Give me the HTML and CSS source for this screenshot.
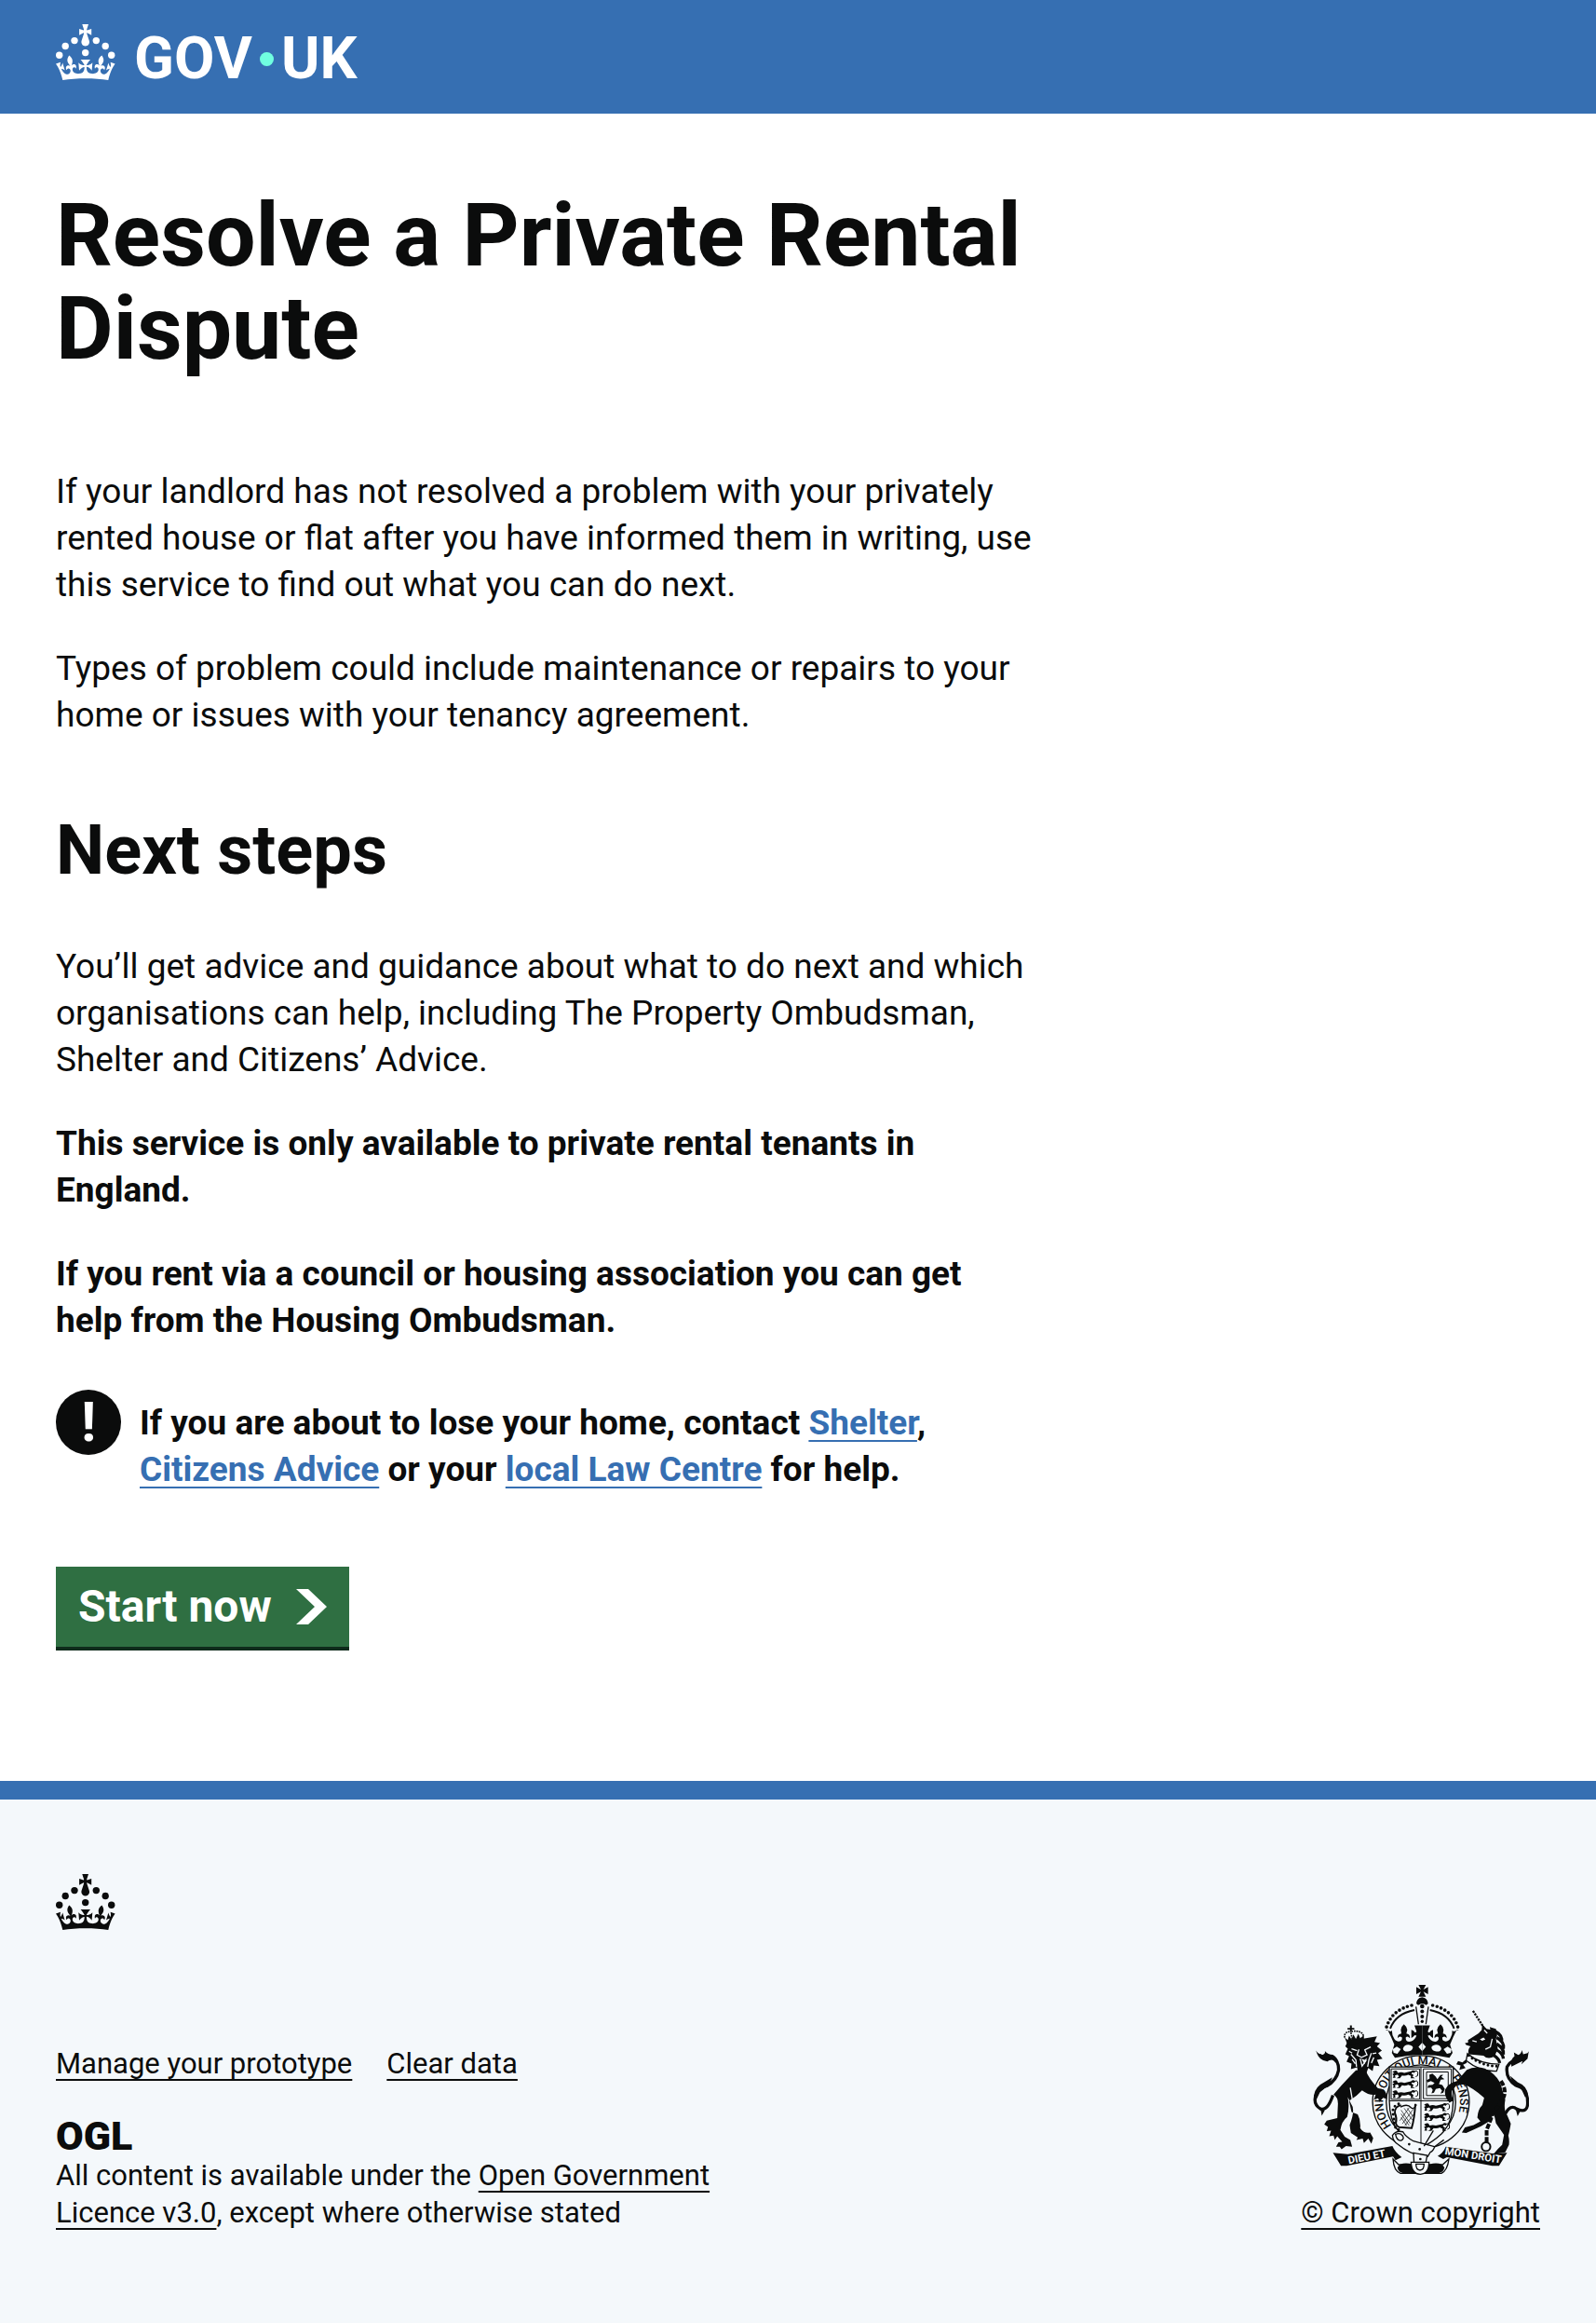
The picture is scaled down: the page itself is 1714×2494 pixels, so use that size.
FILE: index.html
```html
<!DOCTYPE html>
<html lang="en">
<head>
<meta charset="utf-8">
<meta name="viewport" content="width=device-width, initial-scale=1">
<title>Resolve a Private Rental Dispute – GOV.UK</title>
<link rel="stylesheet" href="styles.css">
</head>
<body>
<svg class="sprite" aria-hidden="true">
  <symbol id="crown" viewBox="0 0 64 60">
    <circle cx="20" cy="17.6" r="3.7"/><circle cx="10.2" cy="23.5" r="3.7"/><circle cx="3.7" cy="33.2" r="3.7"/><circle cx="31.7" cy="30.6" r="3.7"/><circle cx="43.3" cy="17.6" r="3.7"/><circle cx="53.2" cy="23.5" r="3.7"/><circle cx="59.7" cy="33.2" r="3.7"/>
    <path d="M33.1,9.8c.2-.1.3-.3.5-.5l4.6,2.4v-6.8l-4.6,1.5c-.1-.2-.3-.3-.5-.5l1.9-5.9h-6.7l1.9,5.9c-.2.1-.3.3-.5.5l-4.6-1.5v6.8l4.6-2.4c.1.2.3.3.5.5l-2.6,8c-.9,2.8,1.2,5.7,4.1,5.7h0c3,0,5.1-2.9,4.1-5.7l-2.6-8ZM37,37.9s-3.4,3.8-4.1,6.1c2.2,0,4.2-.5,6.4-2.8l-.7,8.5c-2-2.8-4.4-4.1-5.7-3.8.1,3.1.5,6.7,5.8,7.2,3.7.3,6.7-1.5,7-3.8.4-2.6-2-4.3-3.7-1.6-1.4-4.5,2.4-6.1,4.9-3.2-1.9-4.5-1.8-7.7,2.4-10.9,3,4,2.6,7.3-1.2,11.1,2.4-1.3,6.2,0,4,4.6-1.2-2.8-3.7-2.2-4.2.2-.3,1.7.7,3.7,3,4.2,1.9.3,4.7-.9,7-5.9-1.3,0-2.4.7-3.9,1.7l2.4-8c.6,2.3,1.4,3.7,2.2,4.5.6-1.6.5-2.8,0-5.3l5,1.8c-2.6,3.6-5.2,8.7-7.3,17.5-7.4-1.1-15.7-1.7-24.5-1.7h0c-8.8,0-17.1.6-24.5,1.7-2.1-8.9-4.7-13.9-7.3-17.5l5-1.8c-.5,2.5-.6,3.7,0,5.3.8-.8,1.6-2.3,2.2-4.5l2.4,8c-1.5-1-2.6-1.7-3.9-1.7,2.3,5,5.2,6.2,7,5.9,2.3-.4,3.3-2.4,3-4.2-.5-2.4-3-3.1-4.2-.2-2.2-4.6,1.6-6,4-4.6-3.7-3.7-4.2-7.1-1.2-11.1,4.2,3.2,4.3,6.4,2.4,10.9,2.5-2.8,6.3-1.3,4.9,3.2-1.8-2.7-4.1-1-3.7,1.6.3,2.3,3.3,4.1,7,3.8,5.4-.5,5.7-4.2,5.8-7.2-1.3-.2-3.7,1-5.7,3.8l-.7-8.5c2.2,2.3,4.2,2.7,6.4,2.8-.7-2.3-4.1-6.1-4.1-6.1h10.6Z"/>
  </symbol>
</svg>

<header class="header">
  <div class="container">
    <a class="logo" href="#" aria-label="GOV.UK">
      <svg class="crown"><use href="#crown"/></svg>
      <span class="wordmark"><span>GOV</span><span class="dot"></span><span>UK</span></span>
    </a>
  </div>
</header>

<main class="container main">
  <div class="column">
    <h1>Resolve a Private Rental Dispute</h1>
    <p>If your landlord has not resolved a problem with your privately rented house or flat after you have informed them in writing, use this service to find out what you can do next.</p>
    <p>Types of problem could include maintenance or repairs to your home or issues with your tenancy agreement.</p>
    <h2>Next steps</h2>
    <p>You’ll get advice and guidance about what to do next and which organisations can help, including The Property Ombudsman, Shelter and Citizens’ Advice.</p>
    <p class="bold">This service is only available to private rental tenants in England.</p>
    <p class="bold">If you rent via a council or housing association you can get help from the Housing Ombudsman.</p>
    <div class="warning">
      <span class="warning-icon" aria-hidden="true">!</span>
      <strong>If you are about to lose your home, contact <a href="#">Shelter</a>, <a href="#">Citizens Advice</a> or your <a href="#">local Law Centre</a> for help.</strong>
    </div>
    <button class="start" type="button">Start now
      <svg viewBox="0 0 33 38" aria-hidden="true"><path d="M0 0h13l20 19-20 19H0l20-19z"/></svg>
    </button>
  </div>
</main>

<footer class="footer">
  <div class="container">
    <svg class="crown" aria-hidden="true"><use href="#crown"/></svg>
    <div class="meta">
      <div class="meta-main">
        <ul class="links">
          <li><a href="#">Manage your prototype</a></li>
          <li><a href="#">Clear data</a></li>
        </ul>
        <div class="ogl">OGL</div>
        <p class="licence">All content is available under the <a href="#">Open Government Licence v3.0</a>, except where otherwise stated</p>
      </div>
      <a class="copyright" href="#">
        <svg class="crest" viewBox="84 62 696 613" aria-hidden="true">
          <defs>
            <path id="garter" d="M337 516A124 122 0 1 1 531 516"/>
            <path id="motto-left" d="M199 640L345 611"/>
            <path id="motto-right" d="M508 609L700 639"/>
            <g id="passant">
              <path d="M0 5q6-7 14-4l4 7q10-4 20 0l22-5q7-7 14 0l-4 5q-6-4-9 2l7 5-3 6 8 4h-14l1-7-9-4q-10 5-20 2l-7 9H13l8-5-4-7-9 3 2 8H1l3-6-4-6 6-3z"/>
              <path class="ln3" d="M68 6q12-10 14 2t-7 12"/>
            </g>
            <g id="crown-half">
              <path class="beads" d="M402 128Q337 143 320 201"/>
              <path class="ln5" d="M411 143Q350 155 333 203"/>
              <path class="ln4" d="M416 132l8 57"/>
              <path d="M317 206l17 6 5-3q-1 13 5 23 5 14 19 12 9-2 8-12-8-7-14 2-1-14 12-15l-2-12q3-13 10-18 8 6 11 18l-3 12q13 2 11 15-7-9-13-2-1 12 11 13 16 0 24-19l-6-2q-7 8-11 9v-26q8 2 12 9l5-3-7-20h25v94q-45 0-88 10l-10-16 8-27q-10-25-22-48z"/>
              <path class="bg" d="M341 269l13-8 13 8-11 15-12-3zM374 267q5-13 18-12 14 2 14 10-2 10-16 12-15 1-16-10zM424 262l12-14v28z"/>
            </g>
          </defs>

          <!-- garter -->
          <ellipse class="bg" cx="432" cy="440" rx="158" ry="151"/>
          <ellipse class="ring" cx="432" cy="440" rx="156" ry="150"/>
          <ellipse class="ring" cx="432" cy="440" rx="112" ry="120"/>
          <text class="garter-text"><textPath href="#garter">HONI SOIT QUI MAL Y PENSE</textPath></text>

          <!-- imperial crown -->
          <path class="bg" d="M330 212h212l-18 74q-85-20-176 0z"/>
          <use href="#crown-half"/>
          <use href="#crown-half" transform="translate(872)scale(-1 1)"/>
          <path d="M424 62h24l-8 15 15-8v23l-15-8 8 16h-24l8-16-15 8V69l15 8zM417 122q2-18 19-20 17 2 19 20l-6 5q-13-8-26 0z"/>
          <circle cx="436" cy="131" r="7"/><circle cx="436" cy="148" r="6"/><circle cx="436" cy="164" r="6"/><circle cx="436" cy="180" r="5"/>

          <!-- shield -->
          <path class="shield" d="M330 327h206v108q0 70-38 108-30 28-66 44-34-16-64-44-38-38-38-108z"/>
          <path class="ln3" d="M330 436h206M432 327v256M336 333h92v98h-92z"/>
          <use href="#passant" x="340" y="338"/><use href="#passant" x="340" y="370"/><use href="#passant" x="340" y="402"/>
          <use href="#passant" x="442" y="444"/><use href="#passant" x="442" y="476"/><use href="#passant" x="442" y="508"/>
          <path class="ln3" d="M440 333h90v96h-90z"/><path class="ln3" d="M450 343h70v76h-70z"/>
          <path d="M459 352l10-4 10 9 6 9 10-13 9-1-6 7 10 7-12 2-6 14 11 3 8 13-5 12-9 3 5-10-7-8-13 3-6 12-8 2 4-11-5-8-12 1 3-8 14-2 6-6-12-6-11 5-3-7 10-6z"/>
          <path class="ln5" d="M368 450q-22 4-20 26 7 16 3 32 3 15 20 14l31 2q9-30 12-78"/>
          <path class="beads-small" d="M360 446q-22 8-18 32 4 18 3 32 5 22 26 20"/>
          <path class="ln2" d="M368 466l30 44M368 478l26 38M378 460l26 38M388 460l18 26M368 490l18 26M372 510l36-48M364 500l30-42M380 516l28-36"/>
          <path class="ln4" d="M366 456q22-12 34 2 8 8 18-10"/>

          <!-- garter strap and buckle -->
          <path class="strap" d="M340 548q12-18 34-12 8 16 34 30l68 18q-4 14-14 18l-8 14q-50-2-94-38-18-10-20-30z"/>
          <path class="strap" d="M350 544q14-6 22 4t-4 16q-14 2-18-20zM408 604l44 8-6 32h-36z"/>
          <circle cx="394" cy="576" r="4"/><circle cx="428" cy="592" r="4"/><circle cx="430" cy="624" r="4"/>
          <path class="ln4" d="M442 582l30-50M476 584l30-22"/>

          <!-- lion supporter -->
          <path class="tail" d="M148 418Q130 470 108 462 84 448 92 420 104 394 128 388 160 370 166 338 168 306 144 298 120 306 104 288"/>
          <path d="M93 274q10 14 22 13 10-4 7-12 10 12 26 12 16 10 18 24-20-14-36-2-28-2-37-35zM86 420q4-30 34-44l26-16-10 24-30 24-12 26zM108 462l14 4-10 18z"/>
          <path d="M222 338q-22 22-46 48l-26 30q16 10 14 34l-2 42-34 8-8 12 12 8-4 14 14-2-6 18 14-2 4 14 8-12 16 18-12 2-8 14h12l6 8 14-10 20 2-6-22-18-10-14-22q4-28 22-42 8-28 2-64l10 20q16 20-4 70l4 26 22 14-4 8 20-4 4 14 14-14 10 16 6-18-10-18q-22 4-32-14 2-26-8-44l-20-8-8-36q24-14 42-34 24 18 44 14l-6 16 14-4 4 12 12-14 12 4-2-18q-6-16-26-16-30-30-42-62z"/>
          <path d="M196 244l-8 16 8 8-8 18 12 6-8 18 16 6-2 18 20-6 4 22 12-8 12 10 8-22 14 10 4-18 18 2-8-20 18-4-14-18 12-8-16-14 10-10-18-4 8-18z"/>
          <path class="cut" d="M208 268l18 6M270 262l-20 10M232 270l-6 18 14 8 18-8-8-18M206 286l16 18 2 22M272 282l-8 22-4 22M236 300l6 24 14-20M210 302l10 14M280 296l-8 18M200 276l10 6M288 282l-12 2M204 394l8 46"/>
          <path class="bg" d="M240 300l10 18 8-20-8 6z"/>
          <path d="M203 193h6v8h8v5h-8v8h-6v-8h-8v-5h8z"/>
          <path class="crownlet" d="M186 232q-4-18 20-20M246 226q-4-18-38-14M206 216l6 28"/>
          <path d="M186 232l10 8 4-14 8 12 6-16 8 14 8-16 6 14 12-10v20l-52 14z"/>

          <!-- unicorn supporter -->
          <path class="horn" d="M600 146l34 52"/>
          <path class="tail" d="M704 478Q722 446 740 462 780 480 776 436 776 396 738 386 704 364 710 326 722 300 764 302"/>
          <path d="M780 276l-4 24-20 18 4-10-36 18q-4-24 10-34l-2-12 14 8q10-4 12-16l4 14 14-4zM778 420q-2-32-34-44l-24-20 8 22 28 20 12 26zM754 466l-10 20-6-22z"/>
          <path d="M584 240l34-22 10-10 2-18 14 14 12 2-2-8 20 6 4 20-4 12 6 32-10 24q-22 12-36-2l-48-4q-4-16 6-26l-14-4-4-6 10-2z"/>
          <path class="mane" d="M672 212q24 12 20 34M676 232q26 14 22 36M676 252q26 16 22 34M676 272q20 10 22 28M668 290q16 10 18 24"/>
          <path class="bg" d="M622 238l12-6 6 6-10 4z"/>
          <path class="cut" d="M662 236l-6 26-16 8M598 242l14 4M636 208l10 10"/>
          <path class="collar" d="M582 284q40 34 102 34l-8 22q-54 2-98-34z"/>
          <path class="beads-small" d="M586 290q42 34 92 34"/>
          <path d="M580 336q26-14 58-4 34 16 50 46l16 54q-6 34 6 50l12 28q-4 24-8 38 4 14 2 30l-12 24-38 6q14-18 28-30l6-32-26-38-8-38q-4 28-20 36l-20 12-48 22-14-2 10-16 28-8 22-12-10-12q2-26 16-40l6-24q-36-32-62-42l-24-2-18 22q-4 14 6 30l-14 8q-18-20-14-42 8-20 38-28z"/>
          <path d="M552 308l14 4 12-10 2 12-12 6 8 10-20 6 4-14-14-4z"/>
          <path class="chain" d="M690 372q20 30 8 54t-22 34-18 34l-14 36v44"/>
          <circle class="ln5" cx="642" cy="584" r="14"/>

          <!-- motto ribbon -->
          <path d="M148 604l48 4 144-26q8 20 30 36l-20 10-8-12-150 30h-18zM710 604l-48 2-150-22q-8 20-26 30l18 10 12-6 146 28h22z"/>
          <path class="strap" d="M342 624q2 38 24 46h132q20-10 24-46l-20 18H360z"/>
          <path d="M356 652q8-18 38-14 22 4 36 32h-54q-16-2-20-18zM508 652q-8-18-38-14-22 4-36 32h54q16-2 20-18z"/>
          <path class="strap" d="M400 634h58q0 38-28 39-28-1-30-39zM416 640h26q0 20-13 20t-13-20z"/>
          <text class="motto"><textPath href="#motto-left">DIEU ET</textPath></text>
          <text class="motto"><textPath href="#motto-right">MON DROIT</textPath></text>
        </svg>
        <span>© Crown copyright</span>
      </a>
    </div>
  </div>
</footer>
</body>
</html>
```
FILE: styles.css
```css
:root {
  --brand: #366fb2;
  --ink: #0b0c0c;
  --pale: #f4f8fb;
}
* { box-sizing: border-box; }
body {
  margin: 0;
  min-height: 100vh;
  display: flex;
  flex-direction: column;
  background: #fff;
  color: var(--ink);
  font-family: Roboto, Arial, sans-serif;
  font-size: 37px;
  line-height: 50px;
}
a {
  color: inherit;
  text-decoration-thickness: 2px;
  text-underline-offset: 6px;
  text-decoration-skip-ink: none;
}
.sprite { position: absolute; width: 0; height: 0; }
.container { width: 100%; padding: 0 60px; }

.header { background: var(--brand); color: #fff; padding: 26px 0 36px; }
.logo { display: flex; gap: 20px; width: max-content; height: 60px; text-decoration: none; }
.crown { display: block; width: 64px; height: 60px; fill: currentColor; }
.wordmark { display: flex; align-items: center; gap: 8px; height: 74px; font-size: 63px; line-height: 74px; font-weight: 700; }
.dot { width: 15px; height: 15px; border-radius: 50%; background: #70ffe0; }

.main { padding-top: 81px; padding-bottom: 140px; }
.column { width: 66%; }
h1 { margin: 0 0 100px; font-size: 95px; line-height: 100px; font-weight: 700; }
h2 { margin: 0 0 60px; padding-top: 40px; font-size: 74px; line-height: 80px; font-weight: 700; }
p { margin: 0 0 40px; }
.bold { font-weight: 700; }
.warning { display: flex; gap: 20px; margin: 49px 0 80px; }
.warning strong { padding-top: 11px; font-weight: 700; }
.warning a { color: var(--brand); }
.warning-icon {
  flex: none;
  width: 70px;
  height: 70px;
  border-radius: 50%;
  background: var(--ink);
  color: #fff;
  font-size: 60px;
  line-height: 70px;
  font-weight: 700;
  text-align: center;
}
.start {
  display: flex;
  align-items: center;
  gap: 26px;
  height: 90px;
  margin-top: -1px;
  padding: 0 24px;
  border: 0;
  border-bottom: 4px solid #0f2b1b;
  background: #2f6f42;
  color: #fff;
  font: 700 48px/50px Roboto, Arial, sans-serif;
}
.start svg { width: 33px; height: 38px; fill: currentColor; }

.footer {
  flex: 1;
  border-top: 20px solid var(--brand);
  padding: 80px 0;
  background: var(--pale);
  font-size: 31px;
  line-height: 40px;
}
.meta { display: flex; justify-content: space-between; align-items: flex-end; margin-top: 59px; }
.meta-main { flex: 0 1 740px; }
.links { display: flex; gap: 37px; margin: 0 0 34px; padding: 0; list-style: none; }
.ogl { font-size: 43px; line-height: 46px; font-weight: 900; }
.licence { margin: 0; }
.copyright { display: flex; flex-direction: column; align-items: center; gap: 21px; }

.crest { width: 232px; height: 204px; fill: var(--ink); }
.crest .bg { fill: var(--pale); }
.crest .ring { fill: none; stroke: var(--ink); stroke-width: 4; }
.crest .ln2, .crest .ln3, .crest .ln4, .crest .ln5 { fill: none; stroke: var(--ink); stroke-width: 3; }
.crest .ln2 { stroke-width: 2; }
.crest .ln4 { stroke-width: 4; }
.crest .ln5 { stroke-width: 6; }
.crest .shield, .crest .strap, .crest .collar { fill: var(--pale); stroke: var(--ink); stroke-width: 4; }
.crest .beads { fill: none; stroke: var(--ink); stroke-width: 11; stroke-linecap: round; stroke-dasharray: 0 14; }
.crest .beads-small { fill: none; stroke: var(--ink); stroke-width: 9; stroke-linecap: round; stroke-dasharray: 0 14; }
.crest .tail { fill: none; stroke: var(--ink); stroke-width: 10; }
.crest .cut { fill: none; stroke: var(--pale); stroke-width: 4; }
.crest .crownlet { fill: none; stroke: var(--ink); stroke-width: 5; stroke-dasharray: 5 3; }
.crest .horn { fill: none; stroke: var(--ink); stroke-width: 7; stroke-dasharray: 7 3; }
.crest .mane { fill: none; stroke: var(--ink); stroke-width: 10; }
.crest .chain { fill: none; stroke: var(--ink); stroke-width: 12; stroke-dasharray: 17 5; }
.garter-text { font-size: 38px; font-weight: 500; }
.motto { font-size: 34px; font-weight: 700; fill: var(--pale); }
```
